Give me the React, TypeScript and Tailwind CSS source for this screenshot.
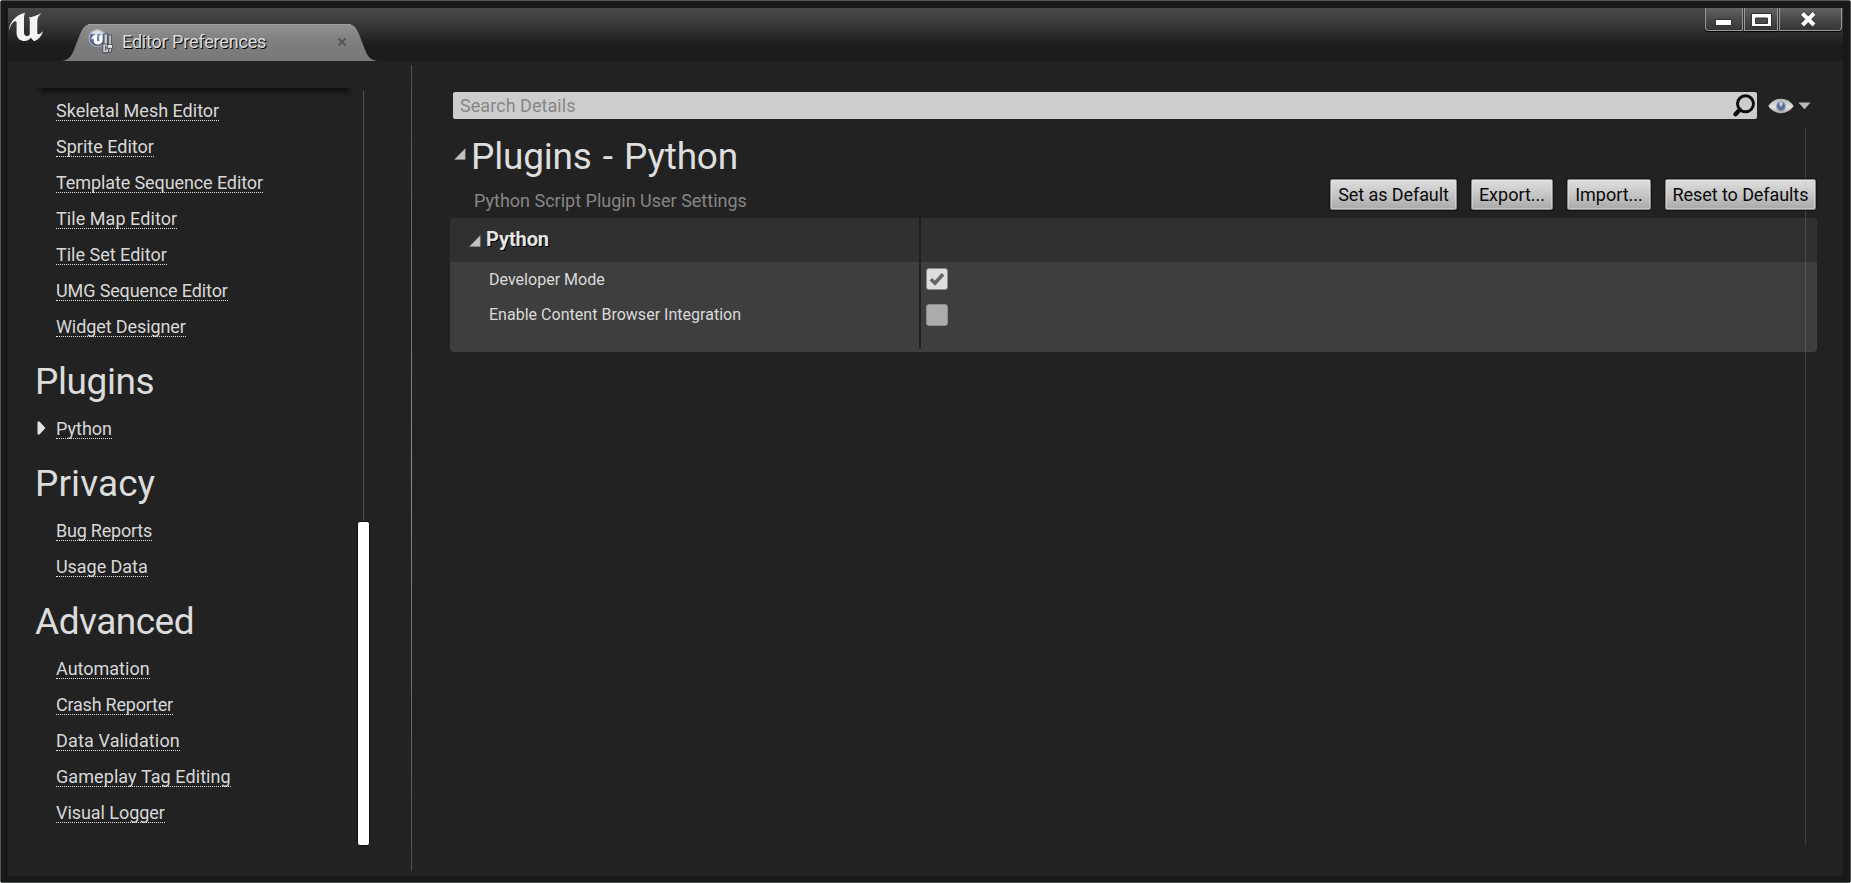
import type { ReactNode } from 'react';

type NavItem = { label: string; active?: boolean; tracking?: string };
type NavSection = { title?: string; tracking?: string; items: NavItem[] };

const sections: NavSection[] = [
  {
    items: [
      { label: 'Skeletal Mesh Editor' },
      { label: 'Sprite Editor' },
      { label: 'Template Sequence Editor', tracking: 'tracking-[-0.1px]' },
      { label: 'Tile Map Editor', tracking: 'tracking-[0.06px]' },
      { label: 'Tile Set Editor' },
      { label: 'UMG Sequence Editor', tracking: 'tracking-[-0.12px]' },
      { label: 'Widget Designer', tracking: 'tracking-[-0.1px]' },
    ],
  },
  { title: 'Plugins', tracking: 'tracking-[-0.4px]', items: [{ label: 'Python', active: true }] },
  {
    title: 'Privacy',
    tracking: 'tracking-[0.1px]',
    items: [
      { label: 'Bug Reports', tracking: 'tracking-[-0.22px]' },
      { label: 'Usage Data', tracking: 'tracking-[-0.05px]' },
    ],
  },
  {
    title: 'Advanced',
    tracking: 'tracking-[-0.5px]',
    items: [
      { label: 'Automation' },
      { label: 'Crash Reporter', tracking: 'tracking-[-0.22px]' },
      { label: 'Data Validation', tracking: 'tracking-[0.14px]' },
      { label: 'Gameplay Tag Editing', tracking: 'tracking-[0.08px]' },
      { label: 'Visual Logger', tracking: 'tracking-[-0.05px]' },
    ],
  },
];

function EngineLogo() {
  return (
    <svg width="36" height="32" viewBox="8 12 36 32" className="mt-1 shrink-0">
      <path
        d="M9 30.500C9.500 22.500 15.500 15 25.200 12.800C24.300 14.500 24 16.500 24 18.500V32.500C24 35 25.300 36 27 36C28.600 36 29.800 35.200 29.800 33.800V20.500C29.800 18.800 29.600 18 28.600 17.400C32.500 16.800 36.800 15.600 41.500 12.900C38.600 15.800 37.300 18 37.300 21V32.500C37.300 35 39.400 34.900 43 31C41.500 36.400 38.600 39.600 34 41.300L30.800 37.700C28.500 40.600 25.700 41.400 22.500 40.700C18.500 39.800 16.600 37.200 16.600 33V23C16.600 21 14.800 20.800 13 22.600C11.100 24.500 10 27.500 9 30.500Z"
        fill="#f4f4f4"
      />
    </svg>
  );
}

function TabIcon() {
  return (
    <svg width="25" height="25" viewBox="0 0 25 25" className="shrink-0">
      <defs>
        <radialGradient id="ball" cx="0.5" cy="0.35" r="0.7">
          <stop offset="0" stopColor="#8d9dbd" />
          <stop offset="0.65" stopColor="#586b91" />
          <stop offset="1" stopColor="#344567" />
        </radialGradient>
      </defs>
      <circle cx="9.500" cy="9" r="8.500" fill="url(#ball)" stroke="#c2c6cd" strokeWidth="0.900" />
      <path d="M2.500 4.500Q9-2.500 16.500 4.500Q9.500 5.500 2.500 4.500Z" fill="#e6e8ec" opacity="0.900" />
      <path
        d="M3 10.500Q4.500 6.300 9 5V11.500Q9.800 13.200 11.300 12V7L14.500 4.800V12.500Q12.500 16 9 15.500Q5.700 15 5.700 11.500V9.300Z"
        fill="#fff"
      />
      <g stroke="#4a4e55" strokeWidth="0.900" fill="#c9ccd0">
        <rect x="16" y="5" width="3.400" height="18.800" />
        <rect x="14.800" y="15" width="5.800" height="8.500" />
        <rect x="20.800" y="6" width="2.600" height="17" />
        <rect x="19.300" y="15.500" width="5.300" height="3.800" fill="#e6e8ea" />
      </g>
      <path d="M17.700 17V21.500" stroke="#5d636c" strokeWidth="1.400" />
    </svg>
  );
}

function ExpandArrow({ className }: { className: string }) {
  return (
    <svg width="12" height="12" viewBox="0 0 12 12" className={className}>
      <path d="M11.200 0.600V11.400H0.600Z" fill="#c2c2c2" stroke="#989898" strokeWidth="0.500" />
    </svg>
  );
}

function TitleBar() {
  return (
    <header className="flex h-[53px] shrink-0 bg-linear-to-b from-[#484848] via-[#404040] via-22% to-[#1c1c1c] to-70%">
      <EngineLogo />
      <div className="relative ml-[18px] flex w-[315px] items-start self-end">
        <svg width="315" height="37" viewBox="0 0 315 37" className="block">
          <defs>
            <linearGradient id="tab" x1="0" y1="0" x2="0" y2="1">
              <stop offset="0" stopColor="#919191" />
              <stop offset="0.500" stopColor="#7d7d7d" />
              <stop offset="1" stopColor="#797979" />
            </linearGradient>
          </defs>
          <path
            d="M0 37C6 36 9 33 11.500 27L18.500 9C21 3 24 0.500 28 0.500H287C291 0.500 294 3 296.500 9L303.500 27C306 33 309 36 315 37Z"
            fill="url(#tab)"
          />
          <path d="M26 0.500H289" stroke="#a0a0a0" strokeWidth="1" />
        </svg>
        <div className="absolute inset-0 flex items-start pt-[5px] pl-[26px]">
          <TabIcon />
          <span className="ml-[9px] text-[18px] leading-[25px] tracking-[-0.17px] text-[#dcdcdc] [text-shadow:1px_1px_0_#000]">
            Editor Preferences
          </span>
          <svg width="10" height="10" viewBox="0 0 10 10" className="mt-2 mr-[30px] ml-auto">
            <path d="M1.400 1.400L8.600 8.600M8.600 1.400L1.400 8.600" stroke="#555" strokeWidth="2" />
          </svg>
        </div>
      </div>
      <div className="mr-px ml-auto flex h-6 gap-px">
        <WindowButton className="w-[38px] rounded-bl">
          <rect x="9.500" y="11.500" width="16" height="6" fill="#fff" stroke="#333" />
        </WindowButton>
        <WindowButton className="w-[34px]">
          <path d="M6.500 5.500H26.500V18.500H6.500Z" fill="#fff" stroke="#333" />
          <path d="M10.500 10H22.500V15.500H10.500Z" fill="#4c4c4c" stroke="#333" />
        </WindowButton>
        <WindowButton className="w-[63px] rounded-br">
          <path d="M22.500 5.500L34 17M34 5.500L22.500 17" stroke="#2c2c2c" strokeWidth="6" />
          <path d="M22.500 5.500L34 17M34 5.500L22.500 17" stroke="#fff" strokeWidth="4.200" />
        </WindowButton>
      </div>
    </header>
  );
}

function WindowButton({ className, children }: { className: string; children: ReactNode }) {
  return (
    <button
      className={`${className} block h-[23px] overflow-hidden border border-t-0 border-[#9a9a9a] bg-linear-to-b from-[#636363] via-[#4a4a4a] via-50% to-[#353535] shadow-[0_1px_1px_#000]`}
    >
      <svg className="block h-full w-full">{children}</svg>
    </button>
  );
}

function Sidebar() {
  return (
    <nav className="flex w-[403px] shrink-0 pt-[27px] pl-[27px]">
      <div className="w-[319px]">
        <div className="mb-[-4px] h-[9px] bg-linear-to-b from-[#0c0c0c] via-[#161616] via-35% to-[#222] [mask-image:linear-gradient(to_right,transparent,#000_10px,#000_309px,transparent)]" />
        {sections.map((section) => (
          <section key={section.title ?? 'editors'}>
            {section.title && (
              <h2 className={`${section.tracking} h-[66px] pt-[7px] text-[37px] leading-[59px] text-[#dcdcdc]`}>
                {section.title}
              </h2>
            )}
            <ul>
              {section.items.map((item) => (
                <li key={item.label} className="flex h-9 items-start pt-2 pl-[2px]">
                  <span className="mt-[2px] w-[19px] shrink-0">
                    {item.active && (
                      <svg width="9" height="14" viewBox="0 0 9 14" className="block">
                        <path d="M0.500 0.500H2.500L8.500 7L2.500 13.500H0.500Z" fill="#e2e2e2" />
                      </svg>
                    )}
                  </span>
                  <a
                    className={`${item.tracking ?? 'tracking-normal'} border-b border-dotted border-[#dedede] text-[18px] leading-[19px] whitespace-nowrap text-[#d8d8d8]`}
                  >
                    {item.label}
                  </a>
                </li>
              ))}
            </ul>
          </section>
        ))}
      </div>
      <div className="mt-[3px] ml-[3px] flex w-[13px] flex-col items-center">
        <div className="h-[430px] w-px bg-[#505050]" />
        <div className="h-[325px] w-[13px] rounded-[3px] border border-[#111] bg-white" />
      </div>
    </nav>
  );
}

function SearchRow() {
  return (
    <div className="flex items-center">
      <div className="flex h-[27px] w-[1304px] items-center rounded-[2px] bg-[#cdcdcd] pr-px pl-[7px]">
        <span className="text-[18px] leading-[27px] tracking-[0.05px] text-[#878787]">Search Details</span>
        <svg width="24" height="24" viewBox="0 0 24 24" className="ml-auto">
          <circle cx="13.500" cy="9.800" r="8" fill="none" stroke="#0a0a0a" strokeWidth="2.900" />
          <path d="M7.800 15.800L3.500 20.200" stroke="#0a0a0a" strokeWidth="4.400" strokeLinecap="round" />
        </svg>
      </div>
      <svg width="26" height="16" viewBox="0 0 27 16" preserveAspectRatio="none" className="ml-[11px]">
        <defs>
          <linearGradient id="eye" x1="0" y1="0" x2="0" y2="1">
            <stop offset="0" stopColor="#b8b8b8" />
            <stop offset="0.600" stopColor="#e2e2e2" />
            <stop offset="1" stopColor="#a4a4a4" />
          </linearGradient>
        </defs>
        <path d="M0.300 8Q5.500 0.800 13.500 0.800T26.700 8Q21.500 15.200 13.500 15.200T0.300 8Z" fill="url(#eye)" />
        <circle cx="13.500" cy="8.300" r="4.900" fill="#7486a8" />
        <path d="M12.200 4V7.500Q13.500 9 14.800 7.500V4Z" fill="#cdd4e2" />
        <path d="M11 6.500V8Q11.200 10.800 13.500 10.800T16 8V6.500" fill="none" stroke="#52668e" strokeWidth="1.700" />
      </svg>
      <svg width="13" height="8" viewBox="0 0 13 8" className="ml-1">
        <path d="M0.400 0.500H12.600L6.500 7.200Z" fill="#b9b9b9" />
      </svg>
    </div>
  );
}

function ActionButton({ className, children }: { className: string; children: ReactNode }) {
  return (
    <button
      className={`${className} h-[31px] rounded-[2px] border border-[#8c8888] bg-linear-to-b from-[#dedede] via-[#c6c6c6] via-50% to-[#a9a9a9] text-[18px] leading-[29px] whitespace-nowrap text-[#0a0a0a] shadow-[inset_0_0_0_1px_rgba(235,230,230,0.45),0_0_1px_1px_#161616]`}
    >
      {children}
    </button>
  );
}

function CheckBox({ checked }: { checked?: boolean }) {
  return (
    <span
      className={`${checked ? 'bg-[#dedede]' : 'bg-[#ababab]'} flex size-[22px] items-center justify-center rounded-[3px] border border-[#8d8d8d]`}
    >
      {checked && (
        <svg width="16" height="14" viewBox="0 0 16 14">
          <path d="M1.800 7.200L6 11.200L14 2.300" fill="none" stroke="#666" strokeWidth="3.600" />
        </svg>
      )}
    </span>
  );
}

function SettingRow({ label, checked, className }: { label: string; checked?: boolean; className: string }) {
  return (
    <div className={`${className} flex pl-[39px]`}>
      <span className={`${checked ? 'pt-px' : 'pt-0'} w-[437px] text-[16px] leading-[22px] tracking-[0.02px] text-[#dadada]`}>
        {label}
      </span>
      <CheckBox checked={checked} />
    </div>
  );
}

function DetailsPanel() {
  return (
    <main className="relative flex grow flex-col pt-[31px] pl-[38px]">
      <div className="pl-[3px]">
        <SearchRow />
      </div>
      <div className="flex h-[99px] items-start">
        <div className="grow">
          <div className="flex items-start pl-1">
            <ExpandArrow className="mt-[29px] shrink-0" />
            <h1 className="ml-[5px] pt-[10px] text-[37px] leading-[56px] tracking-[-0.2px] whitespace-nowrap text-[#dedede] [word-spacing:2.200px]">
              Plugins - Python
            </h1>
          </div>
          <p className="mt-[4px] pl-[24px] text-[18px] leading-[24px] text-[#868686]">Python Script Plugin User Settings</p>
        </div>
        <div className="mt-[60px] mr-[27px] flex gap-[14px]">
          <ActionButton className="w-[127px] tracking-[-0.08px]">Set as Default</ActionButton>
          <ActionButton className="w-[82px]">Export...</ActionButton>
          <ActionButton className="w-[84px]">Import...</ActionButton>
          <ActionButton className="w-[151px] tracking-[-0.08px]">Reset to Defaults</ActionButton>
        </div>
      </div>
      <section className="relative h-[134px] w-[1367px] overflow-hidden rounded-[4px] bg-[#3e3e3e]">
        <div className="flex h-11 items-start bg-[#303030] pl-[19px]">
          <ExpandArrow className="mt-[17px]" />
          <h3 className="ml-[5px] pt-2 text-[20px] leading-[26px] font-bold tracking-[-0.1px] text-[#e4e4e4] [text-shadow:1px_1px_0_#000]">
            Python
          </h3>
        </div>
        <SettingRow label="Developer Mode" checked className="pt-[6px]" />
        <SettingRow label="Enable Content Browser Integration" className="pt-[13px]" />
        <div className="absolute top-0 left-[469px] h-[131px] w-[2px] bg-[#202020]" />
      </section>
      <div className="absolute top-[66px] left-[1393px] h-[718px] w-px bg-[#b0b0b0]/20" />
    </main>
  );
}

export default function App() {
  return (
    <div className="flex h-[883px] w-[1851px] flex-col overflow-hidden rounded-[2px] border border-[#525656] bg-[#191919] p-[7px] pb-[6px] font-['Roboto','Liberation_Sans',sans-serif]">
      <TitleBar />
      <div className="flex min-h-0 grow bg-[#222]">
        <Sidebar />
        <div className="mt-1 mb-[5px] w-px shrink-0 bg-linear-to-b from-[#505050] via-[#8c8c8c] to-[#505050]" />
        <DetailsPanel />
      </div>
    </div>
  );
}
